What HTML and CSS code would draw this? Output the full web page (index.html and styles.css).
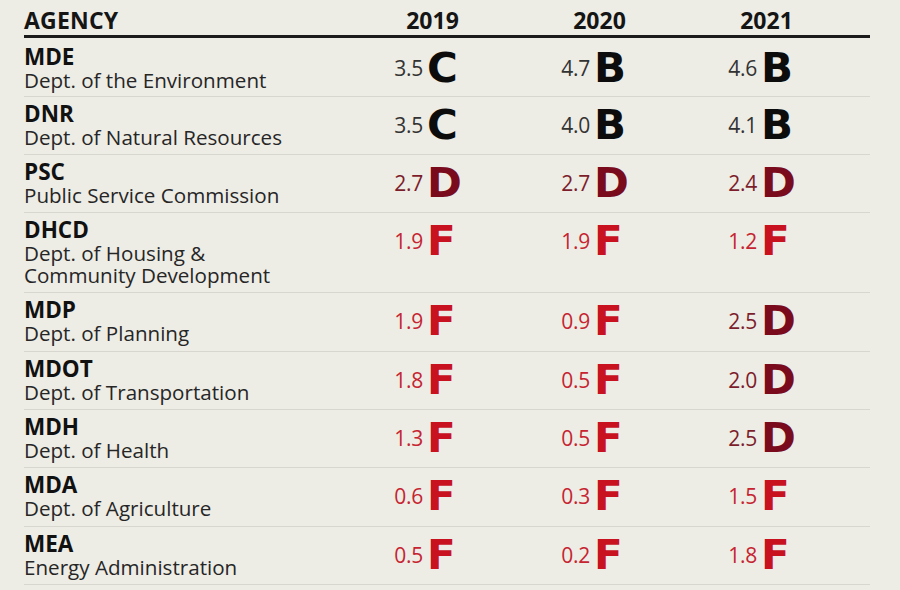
FILE: index.html
```html
<!DOCTYPE html>
<html lang="en">
<head>
<meta charset="utf-8">
<title>Agency grades</title>
<link rel="stylesheet" href="styles.css">
</head>
<body>
<div class="table">
  <div class="head">
    <div class="h-agency">AGENCY</div>
    <div class="h-year">2019</div>
    <div class="h-year">2020</div>
    <div class="h-year">2021</div>
  </div>

  <div class="row first">
    <div class="agency"><div class="abbr">MDE</div><div class="name">Dept. of the Environment</div></div>
    <div class="score k"><span class="num">3.5</span><span class="grade">C</span></div>
    <div class="score k"><span class="num">4.7</span><span class="grade">B</span></div>
    <div class="score k"><span class="num">4.6</span><span class="grade">B</span></div>
  </div>

  <div class="row">
    <div class="agency"><div class="abbr">DNR</div><div class="name">Dept. of Natural Resources</div></div>
    <div class="score k"><span class="num">3.5</span><span class="grade">C</span></div>
    <div class="score k"><span class="num">4.0</span><span class="grade">B</span></div>
    <div class="score k"><span class="num">4.1</span><span class="grade">B</span></div>
  </div>

  <div class="row">
    <div class="agency"><div class="abbr">PSC</div><div class="name">Public Service Commission</div></div>
    <div class="score d"><span class="num">2.7</span><span class="grade">D</span></div>
    <div class="score d"><span class="num">2.7</span><span class="grade">D</span></div>
    <div class="score d"><span class="num">2.4</span><span class="grade">D</span></div>
  </div>

  <div class="row">
    <div class="agency"><div class="abbr">DHCD</div><div class="name">Dept. of Housing &amp;<br>Community Development</div></div>
    <div class="score f"><span class="num">1.9</span><span class="grade">F</span></div>
    <div class="score f"><span class="num">1.9</span><span class="grade">F</span></div>
    <div class="score f"><span class="num">1.2</span><span class="grade">F</span></div>
  </div>

  <div class="row">
    <div class="agency"><div class="abbr">MDP</div><div class="name">Dept. of Planning</div></div>
    <div class="score f"><span class="num">1.9</span><span class="grade">F</span></div>
    <div class="score f"><span class="num">0.9</span><span class="grade">F</span></div>
    <div class="score d"><span class="num">2.5</span><span class="grade">D</span></div>
  </div>

  <div class="row">
    <div class="agency"><div class="abbr">MDOT</div><div class="name">Dept. of Transportation</div></div>
    <div class="score f"><span class="num">1.8</span><span class="grade">F</span></div>
    <div class="score f"><span class="num">0.5</span><span class="grade">F</span></div>
    <div class="score d"><span class="num">2.0</span><span class="grade">D</span></div>
  </div>

  <div class="row">
    <div class="agency"><div class="abbr">MDH</div><div class="name">Dept. of Health</div></div>
    <div class="score f"><span class="num">1.3</span><span class="grade">F</span></div>
    <div class="score f"><span class="num">0.5</span><span class="grade">F</span></div>
    <div class="score d"><span class="num">2.5</span><span class="grade">D</span></div>
  </div>

  <div class="row">
    <div class="agency"><div class="abbr">MDA</div><div class="name">Dept. of Agriculture</div></div>
    <div class="score f"><span class="num">0.6</span><span class="grade">F</span></div>
    <div class="score f"><span class="num">0.3</span><span class="grade">F</span></div>
    <div class="score f"><span class="num">1.5</span><span class="grade">F</span></div>
  </div>

  <div class="row">
    <div class="agency"><div class="abbr">MEA</div><div class="name">Energy Administration</div></div>
    <div class="score f"><span class="num">0.5</span><span class="grade">F</span></div>
    <div class="score f"><span class="num">0.2</span><span class="grade">F</span></div>
    <div class="score f"><span class="num">1.8</span><span class="grade">F</span></div>
  </div>
</div>
</body>
</html>
```

FILE: styles.css
```css
html, body {
  margin: 0;
  padding: 0;
  background: #edece5;
}

body {
  font-family: "Open Sans", "Liberation Sans", sans-serif;
  color: #1a1a1a;
}

.table {
  width: 846px;
  margin-left: 24px;
}

.head,
.row {
  display: grid;
  grid-template-columns: 325px 167px 167px 167px 1fr;
  align-items: start;
}

.head {
  padding-top: 7.5px;
  padding-bottom: 3.5px;
  border-bottom: 3px solid #1b1b1b;
  font-weight: 700;
  font-size: 23px;
  line-height: 24px;
  color: #151515;
}

.h-agency {
  letter-spacing: 0.2px;
}

.h-year {
  text-align: center;
}

.row {
  padding-top: 5px;
  padding-bottom: 6.3px;
  border-bottom: 1px solid #d8d7cf;
}

.row.first {
  padding-top: 6.5px;
  padding-bottom: 5px;
}

.abbr {
  font-weight: 700;
  font-size: 22.5px;
  line-height: 24px;
  color: #111;
}

.name {
  font-size: 20.6px;
  line-height: 22px;
  color: #262626;
}

.score {
  display: flex;
  align-items: center;
  height: 46px;
}

.num {
  width: 74px;
  text-align: right;
  font-size: 21px;
  line-height: 24px;
  letter-spacing: -0.3px;
}

.grade {
  display: inline-block;
  margin-left: 4px;
  font-family: "DejaVu Sans", "Liberation Sans", sans-serif;
  font-weight: 700;
  font-size: 40px;
  line-height: 40px;
  transform: scaleX(1.05);
  transform-origin: left center;
}

.score.k .num { color: #333; }
.score.k .grade { color: #0c0c0c; }

.score.d .num { color: #7c1d2b; }
.score.d .grade { color: #7a0b1c; }

.score.f .num { color: #c62431; }
.score.f .grade { color: #c8121f; }
```
